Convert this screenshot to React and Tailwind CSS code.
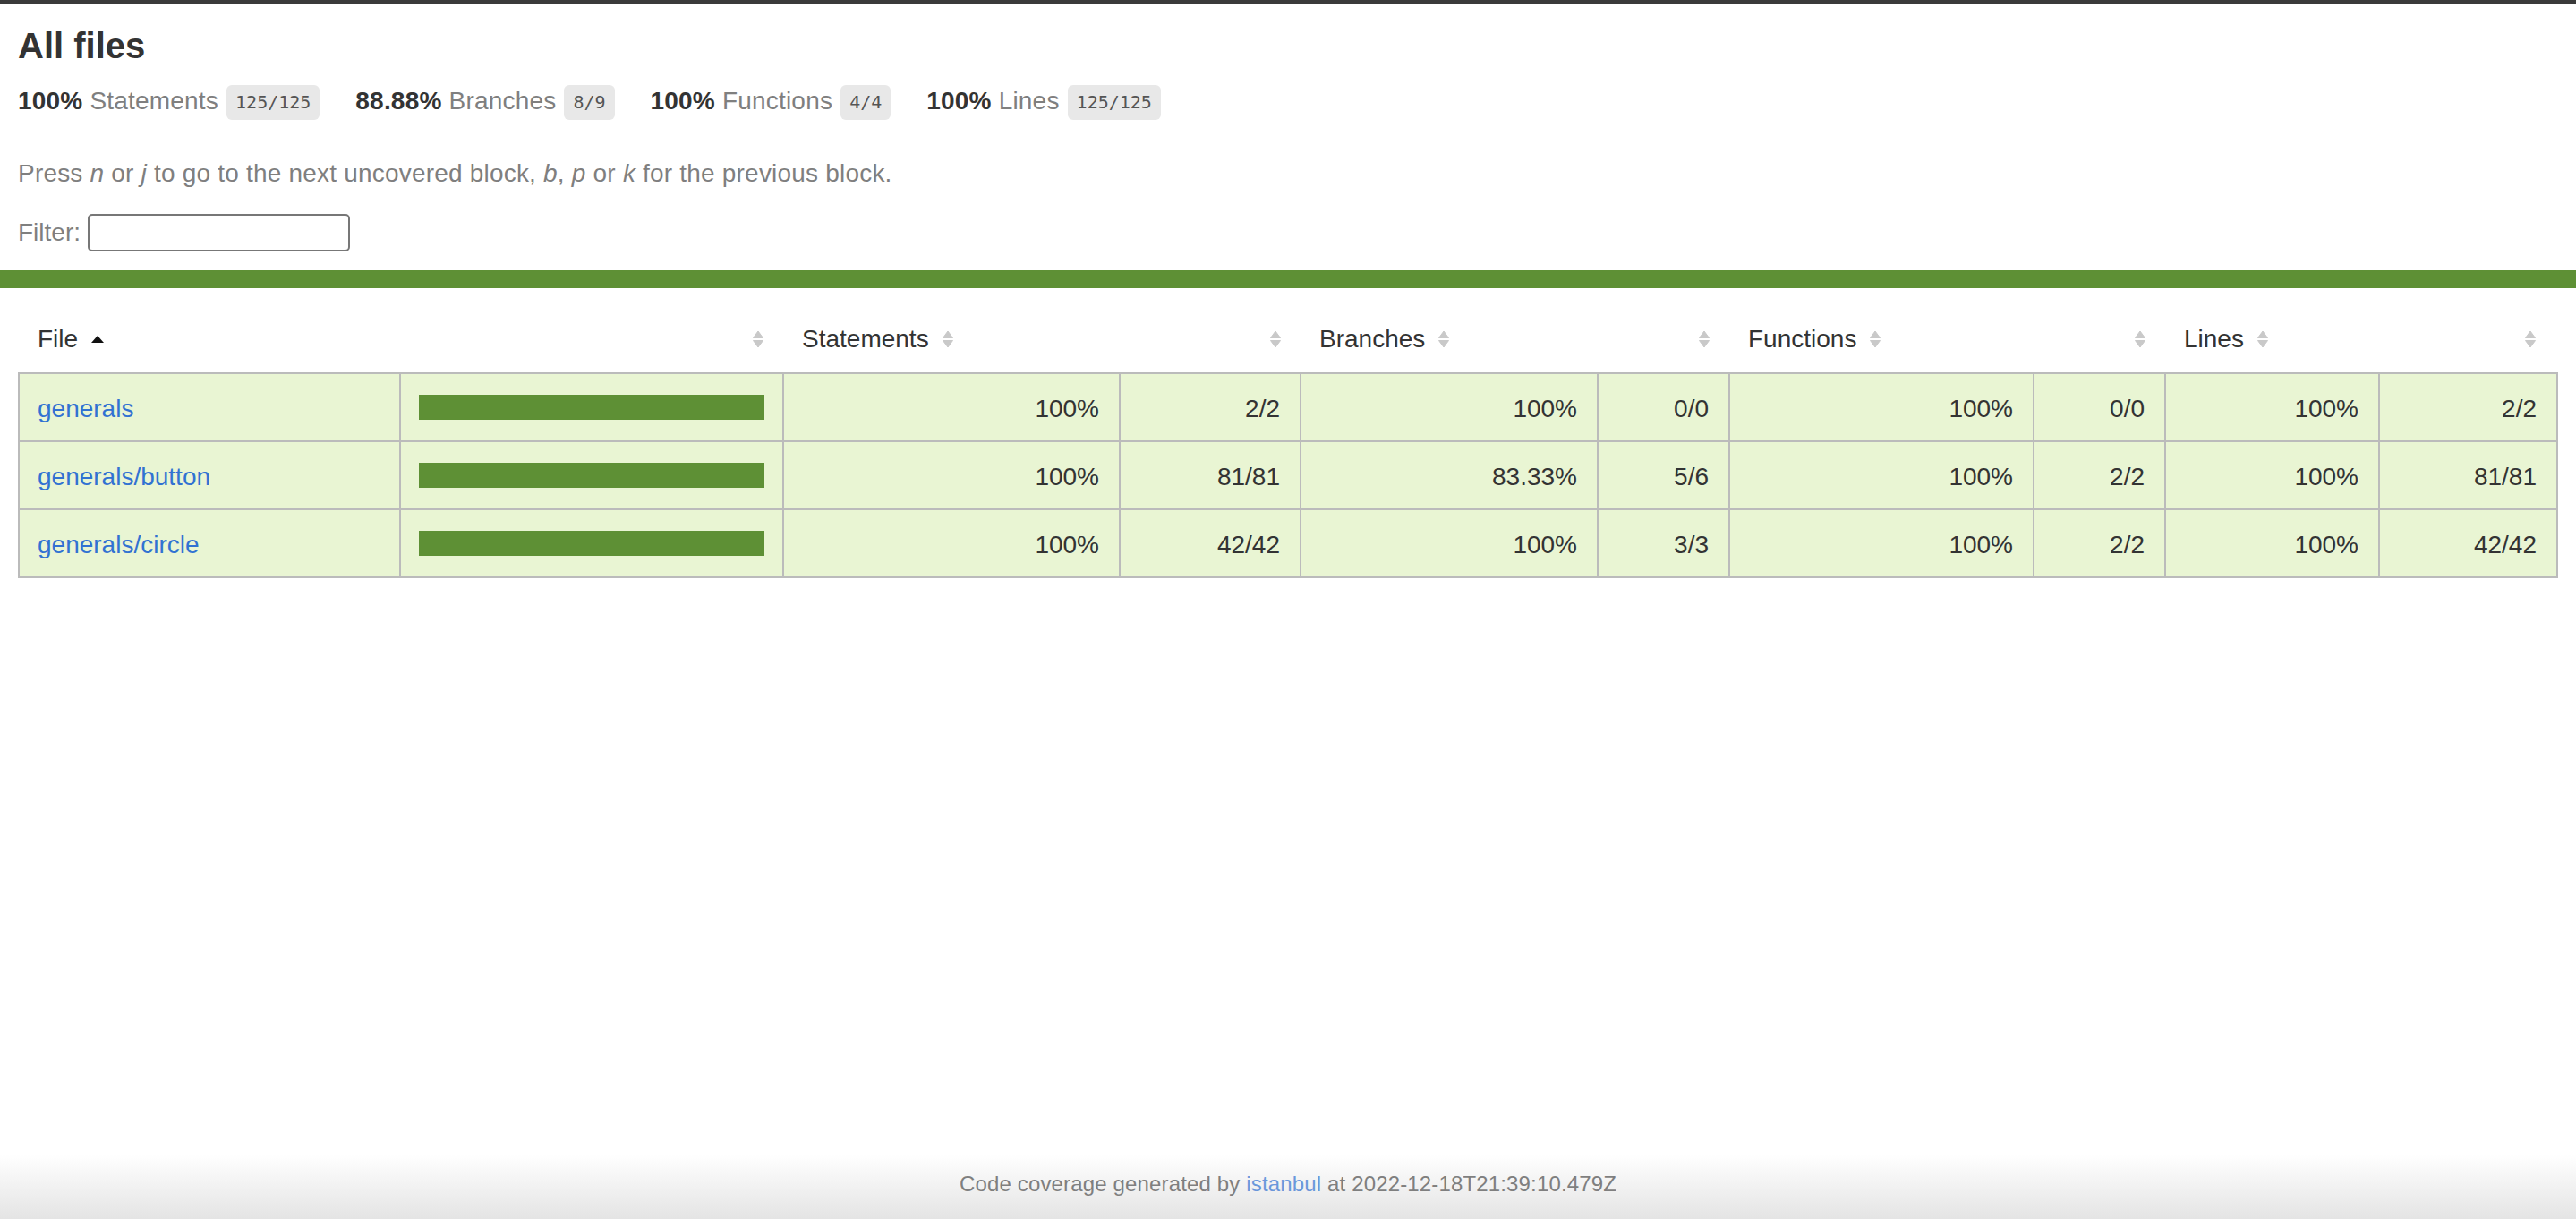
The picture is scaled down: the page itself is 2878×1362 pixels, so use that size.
import React from "react";

const COLS = "grid-cols-[426px_428px_376px_202px_332px_147px_340px_147px_239px_197px]";

function Sorter({ active }) {
  if (active) {
    return (
      <svg width="14" height="20" viewBox="0 0 14 20" className="ml-[15px] shrink-0">
        <polygon points="0,14 7,6 14,14" fill="#111" />
      </svg>
    );
  }
  return (
    <svg width="14" height="20" viewBox="0 0 14 20" className="ml-[14px] shrink-0">
      <polygon points="1.5,8.5 7,1 12.5,8.5" fill="#c9c9c9" stroke="#c9c9c9" strokeWidth="1" strokeLinejoin="round" />
      <polygon points="1.5,11.5 12.5,11.5 7,19" fill="#c9c9c9" stroke="#c9c9c9" strokeWidth="1" strokeLinejoin="round" />
    </svg>
  );
}

function Fraction({ children }) {
  return (
    <span className="ml-[9px] inline-block rounded-[6px] bg-[#e8e8e8] px-[10px] py-[8px] font-['DejaVu_Sans_Mono',monospace] text-[20px] leading-[23px] tracking-normal text-[#555]">
      {children}
    </span>
  );
}

function Summary({ pct, label, frac }) {
  return (
    <div className="flex items-start">
      <span className="mt-[2px] text-[28px] leading-[32px] tracking-[0.2px]">
        <span className="font-bold text-[#333]">{pct}</span>{" "}
        <span className="text-[#7f7f7f]">{label}</span>
      </span>
      <Fraction>{frac}</Fraction>
    </div>
  );
}

const rows = [
  { file: "generals", s: ["100%", "2/2"], b: ["100%", "0/0"], f: ["100%", "0/0"], l: ["100%", "2/2"] },
  { file: "generals/button", s: ["100%", "81/81"], b: ["83.33%", "5/6"], f: ["100%", "2/2"], l: ["100%", "81/81"] },
  { file: "generals/circle", s: ["100%", "42/42"], b: ["100%", "3/3"], f: ["100%", "2/2"], l: ["100%", "42/42"] },
];

function HeadCell({ label, right, active }) {
  return (
    <div className={`flex h-[74px] items-center ${right ? "justify-end pr-[22px]" : "pl-[20px]"}`}>
      {label ? <span className="text-[28px] leading-[32px] text-[#333]">{label}</span> : null}
      <Sorter active={active} />
    </div>
  );
}

function Num({ children, last }) {
  return (
    <div className={`flex h-[74px] items-center justify-end pr-[22px] pt-[3px] text-[28px] leading-[32px] text-[#333] ${last ? "" : "border-r-2 border-[#bbb]"}`}>
      {children}
    </div>
  );
}

export default function App() {
  return (
    <div className="flex h-[1362px] flex-col overflow-hidden bg-white font-['Liberation_Sans',Arial,sans-serif] text-[#333]">
      <div className="h-[5px] bg-[#3a3a3a]" />
      <div className="px-[20px] pt-[23px]">
        <h1 className="m-0 text-[40px] font-bold leading-[46px] text-[#333]">All files</h1>
        <div className="mt-[21px] flex h-[39px] gap-[40px]">
          <Summary pct="100%" label="Statements" frac="125/125" />
          <Summary pct="88.88%" label="Branches" frac="8/9" />
          <Summary pct="100%" label="Functions" frac="4/4" />
          <Summary pct="100%" label="Lines" frac="125/125" />
        </div>
        <p className="mt-[44px] text-[28px] leading-[32px] tracking-[0.2px] text-[#7f7f7f]">
          Press <em>n</em> or <em>j</em> to go to the next uncovered block, <em>b</em>, <em>p</em> or <em>k</em> for the previous block.
        </p>
        <div className="mt-[29px] flex h-[42px] items-center text-[28px] leading-[32px] text-[#7f7f7f]">
          <span>Filter:</span>
          <input
            type="search"
            className="ml-[8px] h-[42px] w-[293px] rounded-[5px] border-2 border-[#777] bg-white px-[6px] text-[26px] outline-none"
          />
        </div>
      </div>
      <div className="mt-[21px] h-[20px] bg-[#5e9035]" />
      <div className="px-[20px] pt-[20px]">
        <div className={`grid ${COLS} px-[2px]`}>
          <div className="flex h-[74px] items-center pl-[20px]">
            <span className="text-[28px] leading-[32px] text-[#333]">File</span>
            <Sorter active />
          </div>
          <HeadCell right />
          <HeadCell label="Statements" />
          <HeadCell right />
          <HeadCell label="Branches" />
          <HeadCell right />
          <HeadCell label="Functions" />
          <HeadCell right />
          <HeadCell label="Lines" />
          <HeadCell right />
        </div>
        <div className="border-2 border-b-0 border-[#bbb]">
          {rows.map((r) => (
            <div key={r.file} className={`grid ${COLS} border-b-2 border-[#bbb] bg-[#e9f5d3]`}>
              <div className="flex h-[74px] items-center border-r-2 border-[#bbb] pl-[20px] pt-[3px] text-[28px] leading-[32px]">
                <a href="#" className="text-[#3172d2] no-underline">{r.file}</a>
              </div>
              <div className="flex h-[74px] items-center border-r-2 border-[#bbb] px-[20px]">
                <div className="h-[28px] w-full bg-[#5e9035]" />
              </div>
              <Num>{r.s[0]}</Num>
              <Num>{r.s[1]}</Num>
              <Num>{r.b[0]}</Num>
              <Num>{r.b[1]}</Num>
              <Num>{r.f[0]}</Num>
              <Num>{r.f[1]}</Num>
              <Num>{r.l[0]}</Num>
              <Num last>{r.l[1]}</Num>
            </div>
          ))}
        </div>
      </div>
      <div className="mt-auto h-[72px] bg-gradient-to-b from-white to-[#e4e4e4] pt-[19px] text-center text-[24px] leading-[28px] tracking-[0.15px] text-[#7f7f7f]">
        Code coverage generated by{" "}
        <a href="#" className="text-[#3172d2] opacity-70">istanbul</a>{" "}
        at 2022-12-18T21:39:10.479Z
      </div>
    </div>
  );
}
